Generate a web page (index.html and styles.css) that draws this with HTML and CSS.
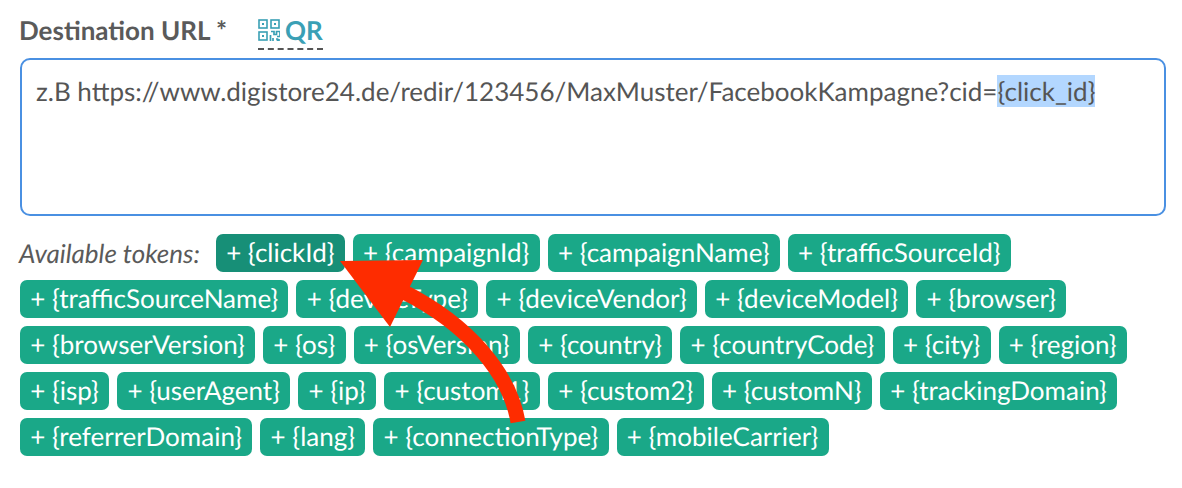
FILE: index.html
```html
<!DOCTYPE html>
<html lang="en">
<head>
<meta charset="utf-8">
<title>Destination URL</title>
<link rel="stylesheet" href="styles.css">
</head>
<body>
<div class="form">
  <div class="label-row">
    <label class="label">Destination URL *</label>
    <a class="qr">
      <svg class="qr-icon" viewBox="0 0 22 22" width="22" height="22" fill="none" stroke="#3aa0b5" stroke-width="1.6">
        <rect x="1" y="1" width="8" height="8"/><rect x="13" y="1" width="8" height="8"/><rect x="1" y="13" width="8" height="8"/>
        <rect x="4" y="4" width="2" height="2" fill="#3aa0b5" stroke="none"/><rect x="16" y="4" width="2" height="2" fill="#3aa0b5" stroke="none"/><rect x="4" y="16" width="2" height="2" fill="#3aa0b5" stroke="none"/>
        <path d="M13 12.500h3v3h2.500v-3h3.500v5h-3M12.500 16v6M15 19v3M18 20h1.500v2M21 20v2" stroke-width="1.700"/>
      </svg>
      <span>QR</span>
    </a>
  </div>
  <div class="input">z.B https://www.digistore24.de/redir/123456/MaxMuster/FacebookKampagne?cid=<span class="sel">{click_id}</span></div>
  <div class="tokens">
    <span class="tokens-label">Available tokens:</span>
    <span class="tag tag-active">+ {clickId}</span>
    <span class="tag">+ {campaignId}</span>
    <span class="tag">+ {campaignName}</span>
    <span class="tag">+ {trafficSourceId}</span>
    <span class="tag">+ {trafficSourceName}</span>
    <span class="tag">+ {deviceType}</span>
    <span class="tag">+ {deviceVendor}</span>
    <span class="tag">+ {deviceModel}</span>
    <span class="tag">+ {browser}</span>
    <span class="tag">+ {browserVersion}</span>
    <span class="tag">+ {os}</span>
    <span class="tag">+ {osVersion}</span>
    <span class="tag">+ {country}</span>
    <span class="tag">+ {countryCode}</span>
    <span class="tag">+ {city}</span>
    <span class="tag">+ {region}</span>
    <span class="tag">+ {isp}</span>
    <span class="tag">+ {userAgent}</span>
    <span class="tag">+ {ip}</span>
    <span class="tag">+ {custom1}</span>
    <span class="tag">+ {custom2}</span>
    <span class="tag">+ {customN}</span>
    <span class="tag">+ {trackingDomain}</span>
    <span class="tag">+ {referrerDomain}</span>
    <span class="tag">+ {lang}</span>
    <span class="tag">+ {connectionType}</span>
    <span class="tag">+ {mobileCarrier}</span>
  </div>
</div>
<svg class="arrow" width="1182" height="488" viewBox="0 0 1182 488">
  <path d="M518 422C510 375 470 325 402 291" fill="none" stroke="#fe2c00" stroke-width="15"/>
  <path d="M340 261L423 260L390 327Z" fill="#fe2c00"/>
</svg>
</body>
</html>
```

FILE: styles.css
```css
html, body {
  margin: 0;
  padding: 0;
  background: #fff;
}
body {
  width: 1182px;
  height: 488px;
  overflow: hidden;
  position: relative;
  font-family: Lato, "Open Sans", sans-serif;
  text-rendering: geometricPrecision;
}
.form {
  padding: 14px 16px 0 20px;
}
.label-row {
  display: flex;
  align-items: center;
  height: 36px;
  margin-bottom: 8px;
}
.label {
  font-size: 26px;
  line-height: 32px;
  height: 36px;
  font-weight: 700;
  color: #5a5a5a;
  width: 237px;
  margin-left: -1px;
  padding-left: 0;
}
.qr {
  display: flex;
  align-items: flex-start;
  gap: 5px;
  height: 36px;
  margin-left: 2px;
  box-sizing: border-box;
  border-bottom: 2px dashed #555;
  color: #3aa0b5;
  font-size: 26px;
  line-height: 32px;
  font-weight: 700;
}
.qr-icon {
  margin-top: 5px;
}
.input {
  box-sizing: border-box;
  width: 1146px;
  height: 158px;
  border: 2px solid #4a90e2;
  border-radius: 10px;
  padding: 15px 14px 13px;
  font-size: 26px;
  line-height: 32px;
  color: #555;
  background: #fff;
}
.sel {
  background: #b3d7ff;
}
.tokens {
  display: flex;
  flex-wrap: wrap;
  align-items: center;
  gap: 8px;
  margin-top: 18px;
}
.tokens-label {
  font-size: 26px;
  line-height: 32px;
  font-style: italic;
  color: #5a5a5a;
  margin-right: 8px;
  margin-left: -1px;
}
.tag {
  display: block;
  box-sizing: border-box;
  height: 38px;
  padding: 0 10.25px;
  border-radius: 7px;
  background: #1aa888;
  color: #fff;
  font-size: 26px;
  line-height: 36px;
  white-space: nowrap;
}
.tag-active {
  background: #178f77;
}
.arrow {
  position: absolute;
  left: 0;
  top: 0;
  pointer-events: none;
}
```
